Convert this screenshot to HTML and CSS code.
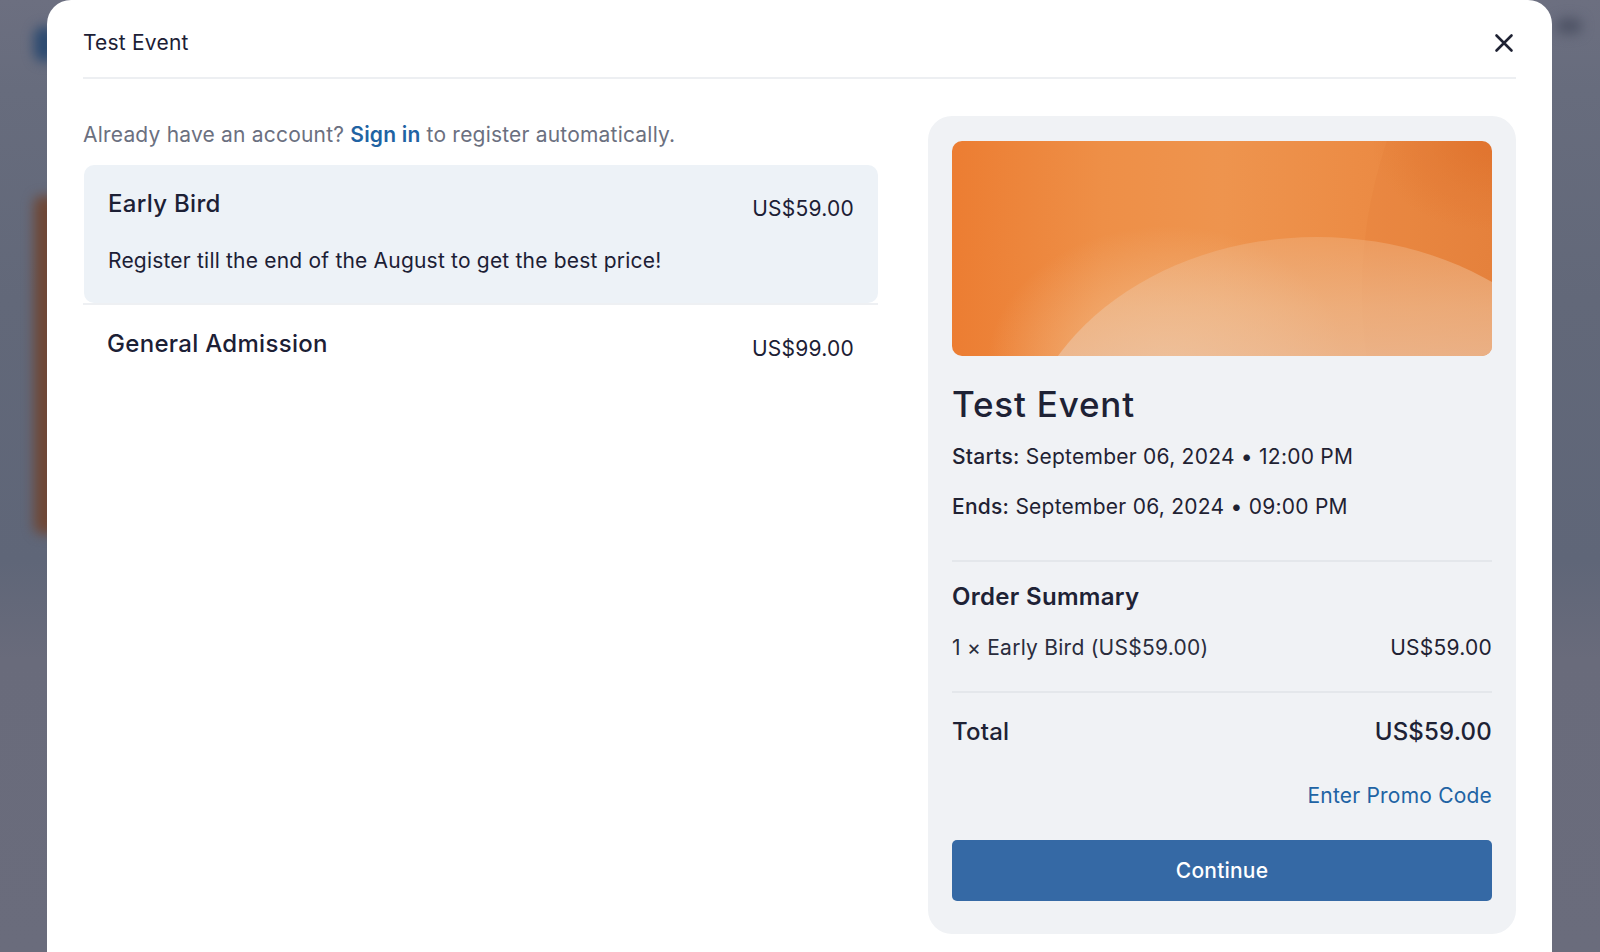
FILE: index.html
```html
<!DOCTYPE html>
<html lang="en">
<head>
<meta charset="utf-8">
<title>Test Event</title>
<link rel="stylesheet" href="styles.css">
</head>
<body>
<div class="backdrop">
  <div class="blob blob-blue"></div>
  <div class="blob blob-orange"></div>
  <div class="blob blob-right"></div>
</div>
<div class="overlay">
  <div class="modal">
    <div class="modal-header">
      <h2 class="modal-title">Test Event</h2>
      <button class="close-btn" aria-label="Close">
        <svg width="24" height="24" viewBox="0 0 24 24" fill="none" stroke="#1f2233" stroke-width="2.6" stroke-linecap="round"><path d="M4.5 4.5 L19.5 19.5 M19.5 4.5 L4.5 19.5"/></svg>
      </button>
    </div>
    <div class="modal-body">
      <div class="tickets">
        <p class="signin-note">Already have an account? <a class="link-strong" href="#">Sign in</a> to register automatically.</p>
        <div class="ticket-row">
          <div class="ticket ticket-selected">
            <div class="ticket-top">
              <span class="ticket-name">Early Bird</span>
              <span class="ticket-price">US$59.00</span>
            </div>
            <p class="ticket-desc">Register till the end of the August to get the best price!</p>
          </div>
        </div>
        <div class="ticket-row">
          <div class="ticket">
            <div class="ticket-top">
              <span class="ticket-name">General Admission</span>
              <span class="ticket-price">US$99.00</span>
            </div>
          </div>
        </div>
      </div>
      <aside class="summary">
        <div class="banner">
          <div class="arc arc-right"></div>
          <div class="arc arc-bottom"></div>
        </div>
        <h1 class="event-title">Test Event</h1>
        <p class="event-date"><span class="label">Starts:</span> September 06, 2024 • 12:00 PM</p>
        <p class="event-date event-date-end"><span class="label">Ends:</span> September 06, 2024 • 09:00 PM</p>
        <hr class="rule rule-first">
        <h3 class="summary-title">Order Summary</h3>
        <div class="line-item">
          <span>1 × Early Bird (US$59.00)</span>
          <span class="line-price">US$59.00</span>
        </div>
        <hr class="rule rule-second">
        <div class="total-row">
          <span>Total</span>
          <span>US$59.00</span>
        </div>
        <div class="promo-row"><a class="promo-link" href="#">Enter Promo Code</a></div>
        <button class="continue-btn">Continue</button>
      </aside>
    </div>
  </div>
</div>
</body>
</html>
```
FILE: styles.css
```css
* { box-sizing: border-box; }
html, body {
  margin: 0;
  padding: 0;
  width: 1600px;
  height: 952px;
  overflow: hidden;
}
body {
  font-family: "Inter", "Noto Sans", sans-serif;
  color: #1f2233;
  background: linear-gradient(180deg, #6c6f80 0px, #676c7d 90px, #626879 300px, #5f6678 560px, #696b7b 660px, #6a6c7c 952px);
  position: relative;
}
.backdrop {
  position: absolute;
  inset: 0;
  pointer-events: none;
}
.blob {
  position: absolute;
  filter: blur(6px);
}
.blob-blue {
  left: 34px; top: 26px; width: 22px; height: 36px;
  background: #2c4a70;
  border-radius: 12px;
}
.blob-orange {
  left: 34px; top: 196px; width: 24px; height: 338px;
  background: #6e4736;
  border-radius: 8px;
}
.blob-right {
  left: 1556px; top: 18px; width: 26px; height: 16px;
  background: #4f5466;
  border-radius: 10px;
}
.overlay {
  position: relative;
  display: flex;
  justify-content: flex-start;
  padding-left: 47px;
  height: 952px;
}
.modal {
  width: 1505px;
  height: 952px;
  background: #ffffff;
  border-radius: 24px 24px 0 0;
  padding: 0 36px;
  display: flex;
  flex-direction: column;
}
.modal-header {
  display: flex;
  align-items: center;
  justify-content: space-between;
  height: 79px;
  flex: none;
  padding-top: 9px;
  border-bottom: 2px solid #edeff2;
}
.modal-title {
  margin: 0;
  font-size: 21px;
  letter-spacing: 0.2px;
  font-weight: 400;
  line-height: 24px;
  color: #1c2035;
}
.close-btn {
  border: 0;
  background: none;
  padding: 0;
  margin-right: 0;
  width: 24px;
  height: 24px;
  display: flex;
  align-items: center;
  justify-content: center;
  cursor: pointer;
}
.modal-body {
  display: flex;
  align-items: flex-start;
  gap: 50px;
  padding-top: 37px;
}
.tickets {
  width: 795px;
  flex: none;
}
.signin-note {
  margin: 5px 0 16px;
  font-size: 21px;
  letter-spacing: 0.2px;
  line-height: 28px;
  color: #6b7080;
}
.link-strong {
  color: #1f63a3;
  font-weight: 600;
  text-decoration: none;
}
.ticket-row {
  border-bottom: 2px solid #eef0f3;
}
.ticket-row:last-child {
  border-bottom: 0;
}
.ticket {
  padding: 23px 24px 28px;
}
.ticket-selected {
  background: #edf2f7;
  border-radius: 10px;
  margin-left: 1px;
}
.ticket-top {
  display: flex;
  justify-content: space-between;
  align-items: flex-start;
}
.ticket-name {
  font-size: 24px;
  letter-spacing: 0.3px;
  line-height: 32px;
  font-weight: 500;
  color: #1c2035;
}
.ticket-price {
  font-size: 21px;
  letter-spacing: 0.25px;
  line-height: 28px;
  padding-top: 7px;
  color: #1c2035;
}
.ticket-desc {
  margin: 24px 0 0;
  font-size: 21px;
  letter-spacing: 0.2px;
  line-height: 28px;
  color: #1c2035;
}
.summary {
  flex: 1;
  background: #f0f2f5;
  border-radius: 24px;
  padding: 25px 24px 33px 24px;
  display: flex;
  flex-direction: column;
}
.banner {
  position: relative;
  height: 215px;
  flex: none;
  border-radius: 10px;
  overflow: hidden;
  background:
    radial-gradient(ellipse 180px 140px at 215px 225px, rgba(244, 196, 150, 0.85), rgba(244, 196, 150, 0) 100%),
    radial-gradient(ellipse 120px 90px at 539px 0px, rgba(222, 105, 35, 0.55), rgba(222, 105, 35, 0) 100%),
    linear-gradient(90deg, #ec7d32 0%, #ee8f47 28%, #ee944e 50%, #ec8c45 75%, #e7843f 100%);
}
.arc {
  position: absolute;
  border-radius: 50%;
}
.arc-right {
  left: 410px;
  top: -311px;
  width: 922px;
  height: 922px;
  background: rgba(215, 105, 40, 0.10);
}
.arc-bottom {
  left: 65px;
  top: 96px;
  width: 600px;
  height: 480px;
  background: linear-gradient(180deg, rgba(240, 178, 128, 0.45) 0px, rgba(238, 190, 150, 0.65) 70px, rgba(236, 192, 158, 0.75) 120px);
}
.event-title {
  margin: 25px 0 0;
  font-size: 35px;
  letter-spacing: 0.8px;
  line-height: 46px;
  font-weight: 500;
  color: #1e2235;
}
.event-date {
  margin: 16px 0 0;
  font-size: 21px;
  letter-spacing: 0.25px;
  line-height: 28px;
  color: #1f2233;
}
.event-date-end {
  margin-top: 22px;
}
.label {
  font-weight: 500;
}
.rule {
  border: 0;
  height: 2px;
  flex: none;
  background: #e4e7eb;
  margin: 0;
}
.rule-first {
  margin-top: 39px;
}
.summary-title {
  margin: 19px 0 0;
  font-size: 24px;
  letter-spacing: 0.3px;
  line-height: 32px;
  font-weight: 600;
  color: #1e2235;
}
.line-item {
  margin-top: 21px;
  display: flex;
  justify-content: space-between;
  font-size: 21px;
  letter-spacing: 0.25px;
  line-height: 28px;
  color: #2a2d3d;
}
.line-price {
  color: #1f2233;
}
.rule-second {
  margin-top: 29px;
}
.total-row {
  margin-top: 23px;
  display: flex;
  justify-content: space-between;
  font-size: 24px;
  letter-spacing: 0.2px;
  line-height: 32px;
  font-weight: 500;
  color: #1e2235;
}
.promo-row {
  margin-top: 34px;
  display: flex;
  justify-content: flex-end;
}
.promo-link {
  font-size: 21px;
  letter-spacing: 0.2px;
  line-height: 28px;
  color: #2063a4;
  text-decoration: none;
}
.continue-btn {
  margin-top: 30px;
  height: 61px;
  flex: none;
  border: 0;
  border-radius: 5px;
  background: #3569a5;
  color: #ffffff;
  font-family: "Inter", "Noto Sans", sans-serif;
  font-size: 21px;
  letter-spacing: 0.2px;
  font-weight: 500;
  cursor: pointer;
}
```
